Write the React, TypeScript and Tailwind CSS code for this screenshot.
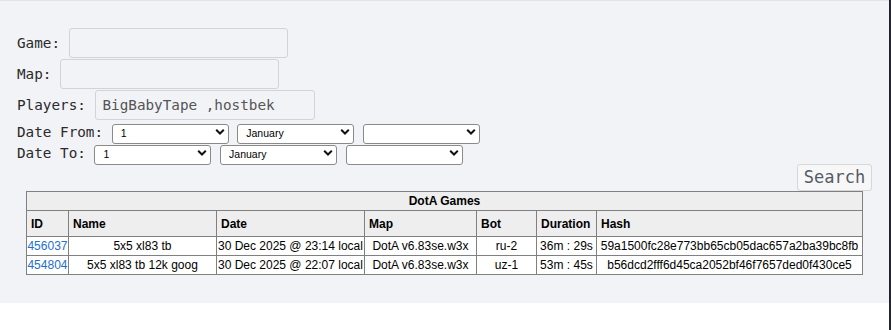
import React from "react";

const mono = "font-['DejaVu_Sans_Mono',monospace]";

function Chevron() {
  return (
    <svg
      width="10"
      height="7"
      viewBox="0 0 10 7"
      className="pointer-events-none absolute right-[4px] top-1/2 -translate-y-1/2"
    >
      <path d="M1.2 1.3 L5 5 L8.8 1.3" fill="none" stroke="#111" strokeWidth="2" />
    </svg>
  );
}

function Select({ value }: { value: string }) {
  return (
    <span className="relative inline-block h-[20px] w-[117px]">
      <select
        defaultValue={value}
        className="h-[20px] w-[117px] appearance-none rounded-[3px] border border-[#8a8a8a] bg-white pl-[8px] pr-[16px] font-['Liberation_Sans',sans-serif] text-[10.5px] text-black"
      >
        <option value={value}>{value}</option>
      </select>
      <Chevron />
    </span>
  );
}

const games = [
  {
    id: "456037",
    name: "5x5 xl83 tb",
    date: "30 Dec 2025 @ 23:14 local",
    map: "DotA v6.83se.w3x",
    bot: "ru-2",
    duration: "36m : 29s",
    hash: "59a1500fc28e773bb65cb05dac657a2ba39bc8fb",
  },
  {
    id: "454804",
    name: "5x5 xl83 tb 12k goog",
    date: "30 Dec 2025 @ 22:07 local",
    map: "DotA v6.83se.w3x",
    bot: "uz-1",
    duration: "53m : 45s",
    hash: "b56dcd2fff6d45ca2052bf46f7657ded0f430ce5",
  },
];

const cols = ["ID", "Name", "Date", "Map", "Bot", "Duration", "Hash"];
const widths = [42, 148, 148, 112, 60, 60, 266];

export default function App() {
  return (
    <div className="flex h-[330px] w-full bg-white">
      <div className="w-[889px]">
        <div className={`h-[303px] border-t border-[#e3e4e9] bg-[#f2f3f7] ${mono} text-[14.3px] text-[#2a2a2a]`}>
          <div className="px-[17px] pt-[27px]">
            <div className="flex h-[31px] items-start">
              <span className="leading-[30px]">Game:&nbsp;</span>
              <input className="h-[30px] w-[219px] rounded-[3px] border border-[#d2d3d8] bg-transparent px-[6px] text-[#555]" />
            </div>
            <div className="flex h-[31px] items-start">
              <span className="leading-[30px]">Map:&nbsp;</span>
              <input className="h-[30px] w-[219px] rounded-[3px] border border-[#d2d3d8] bg-transparent px-[6px] text-[#555]" />
            </div>
            <div className="flex h-[32px] items-start">
              <span className="leading-[30px]">Players:&nbsp;</span>
              <input
                defaultValue="BigBabyTape ,hostbek"
                className="ml-[1px] h-[30px] w-[220px] rounded-[3px] border border-[#d2d3d8] bg-transparent px-[6px] text-[#555]"
              />
            </div>
            <div className="flex h-[21px] items-start">
              <span className="leading-[20px]">Date From:&nbsp;</span>
              <div className="flex gap-[8.6px]">
                <Select value="1" />
                <Select value="January" />
                <Select value="" />
              </div>
            </div>
            <div className="flex h-[21px] items-start">
              <span className="leading-[20px]">Date To:&nbsp;</span>
              <div className="flex gap-[8.6px]">
                <Select value="1" />
                <Select value="January" />
                <Select value="" />
              </div>
            </div>
            <div className="flex justify-end">
              <button className="h-[27px] w-[75px] rounded-[3px] border border-[#d6d7dc] bg-[#f7f7f8] text-[17px] leading-none text-[#555b66]">
                Search
              </button>
            </div>
          </div>
          <div className="flex justify-center">
            <table className="w-[836px] table-fixed border-collapse border border-[#808080] font-['Liberation_Sans',Arial,sans-serif] text-[12px] text-black">
              <colgroup>
                {widths.map((w, i) => (
                  <col key={i} style={{ width: w }} />
                ))}
              </colgroup>
              <thead>
                <tr className="h-[19px] bg-[#eeeeee]">
                  <th colSpan={7} className="border border-[#808080] p-0 text-center font-bold">
                    DotA Games
                  </th>
                </tr>
                <tr className="h-[26px] bg-[#eeeeee]">
                  {cols.map((c) => (
                    <th key={c} className="border border-[#808080] px-[4px] py-0 text-left font-bold">
                      {c}
                    </th>
                  ))}
                </tr>
              </thead>
              <tbody>
                {games.map((g) => (
                  <tr key={g.id} className="h-[19px] bg-white">
                    <td className="border border-[#808080] p-0 text-center">
                      <a href="#" className="text-[#1d6fd0]">
                        {g.id}
                      </a>
                    </td>
                    <td className="border border-[#808080] p-0 text-center">{g.name}</td>
                    <td className="whitespace-nowrap border border-[#808080] p-0 text-center">{g.date}</td>
                    <td className="border border-[#808080] p-0 text-center">{g.map}</td>
                    <td className="border border-[#808080] p-0 text-center">{g.bot}</td>
                    <td className="whitespace-nowrap border border-[#808080] p-0 text-center">{g.duration}</td>
                    <td className="border border-[#808080] p-0 text-center">{g.hash}</td>
                  </tr>
                ))}
              </tbody>
            </table>
          </div>
        </div>
      </div>
      <div className="h-full w-[2px] bg-[#23232f]" />
    </div>
  );
}
